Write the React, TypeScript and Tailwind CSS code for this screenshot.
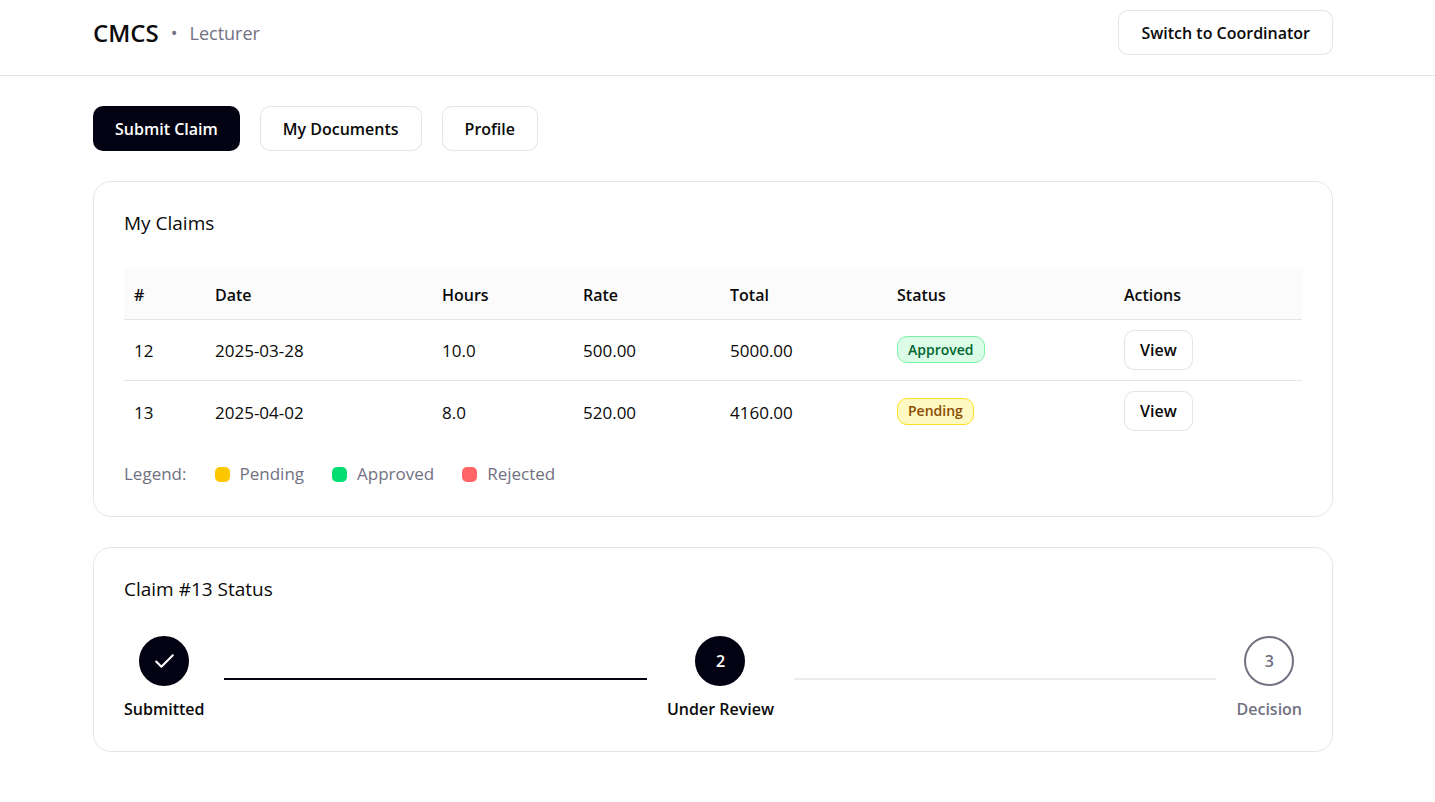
import { Check } from "lucide-react";
import { Fragment } from "react";

const claims = [
  { id: 12, date: "2025-03-28", hours: "10.0", rate: "500.00", total: "5000.00", status: "Approved" },
  { id: 13, date: "2025-04-02", hours: "8.0", rate: "520.00", total: "4160.00", status: "Pending" },
];

const columns = [
  { label: "#", width: "w-[81px]" },
  { label: "Date", width: "w-[227px]" },
  { label: "Hours", width: "w-[141px]" },
  { label: "Rate", width: "w-[147px]" },
  { label: "Total", width: "w-[167px]" },
  { label: "Status", width: "w-[227px]" },
  { label: "Actions", width: "w-[188px]" },
];

const badgeStyles: Record<string, string> = {
  Approved: "bg-green-100 text-green-800 border-green-300",
  Pending: "bg-yellow-100 text-yellow-800 border-[#ffdf20]",
};

const legend = [
  { label: "Pending", color: "bg-[#fdc700]" },
  { label: "Approved", color: "bg-[#05df72]" },
  { label: "Rejected", color: "bg-[#ff6467]" },
];

const steps = [
  { label: "Submitted", state: "done" },
  { label: "Under Review", state: "current" },
  { label: "Decision", state: "upcoming" },
];

const outline = "border border-black/10 bg-white text-[#0a0a0a]";
const button = "h-[45px] rounded-[10px] px-[22px] font-semibold";
const container = "mx-auto max-w-[1280px] px-5";
const textCell = "px-[10px] pt-[3px]";

export default function App() {
  return (
    <div className="bg-white font-['Open_Sans','Noto_Sans',sans-serif] text-base text-[#0a0a0a]">
      <header className="border-b border-black/10 pt-[10px] pr-[9px] pb-5">
        <div className={`${container} flex items-center justify-between`}>
          <div className="flex items-center gap-3">
            <h1 className="text-2xl font-semibold">CMCS</h1>
            <span className="text-lg text-[#717182]">•</span>
            <span className="text-lg text-[#717182]">Lecturer</span>
          </div>
          <button type="button" className={`${button} ${outline}`}>
            Switch to Coordinator
          </button>
        </div>
      </header>

      <main className="pr-[9px]">
        <div className={`${container} flex flex-col gap-[30px] py-[30px]`}>
          <nav className="flex gap-5">
            <button type="button" className={`${button} bg-[#030213] text-white`}>
              Submit Claim
            </button>
            <button type="button" className={`${button} ${outline}`}>
              My Documents
            </button>
            <button type="button" className={`${button} ${outline}`}>
              Profile
            </button>
          </nav>

          <section className="rounded-[18px] border border-black/10 px-[30px] pt-[26px] pb-[29px]">
            <h2 className="text-[19px] leading-[30px]">My Claims</h2>
            <table className="mt-[31px] w-full table-fixed border-collapse text-left">
              <thead>
                <tr className="h-[50px] border-b border-black/10 bg-[#fbfbfc]">
                  {columns.map((c) => (
                    <th key={c.label} scope="col" className={`${textCell} font-semibold ${c.width}`}>
                      {c.label}
                    </th>
                  ))}
                </tr>
              </thead>
              <tbody className="text-[17px]">
                {claims.map((c) => (
                  <tr key={c.id} className="h-[61px] border-b border-black/10 last:border-b-0">
                    <td className={textCell}>{c.id}</td>
                    <td className={textCell}>{c.date}</td>
                    <td className={textCell}>{c.hours}</td>
                    <td className={textCell}>{c.rate}</td>
                    <td className={textCell}>{c.total}</td>
                    <td className="px-[10px]">
                      <span
                        className={`inline-flex h-[27px] items-center rounded-[10px] border px-[10px] text-sm font-semibold ${badgeStyles[c.status]}`}
                      >
                        {c.status}
                      </span>
                    </td>
                    <td className="px-[10px]">
                      <button
                        type="button"
                        className={`h-10 rounded-[10px] px-[15px] text-base font-semibold ${outline}`}
                      >
                        View
                      </button>
                    </td>
                  </tr>
                ))}
              </tbody>
            </table>
            <div className="mt-5 flex items-center gap-7 text-[17px] leading-[26px] text-[#717182]">
              <span>Legend:</span>
              {legend.map((l) => (
                <span key={l.label} className="flex items-center gap-[10px]">
                  <span className={`size-[15px] rounded-[5px] ${l.color}`} />
                  {l.label}
                </span>
              ))}
            </div>
          </section>

          <section className="rounded-[18px] border border-black/10 px-[30px] pt-[26px] pb-[29px]">
            <h2 className="text-[19px] leading-[30px]">Claim #13 Status</h2>
            <div className="mt-8 flex items-center">
              {steps.map((s, i) => (
                <Fragment key={s.label}>
                  {i > 0 && (
                    <div
                      className={`mx-5 h-[2px] flex-1 ${s.state === "current" ? "bg-[#030213]" : "bg-[#ececf0]"}`}
                    />
                  )}
                  <div className="flex flex-col items-center gap-[10px] leading-[26px] font-semibold">
                    <div
                      className={`flex size-[50px] items-center justify-center rounded-full border-2 ${
                        s.state === "upcoming"
                          ? "border-[#717182] bg-white text-[#717182]"
                          : "border-[#030213] bg-[#030213] text-white"
                      }`}
                    >
                      {s.state === "done" ? <Check size={25} strokeWidth={2} /> : i + 1}
                    </div>
                    <span className={s.state === "upcoming" ? "text-[#717182]" : ""}>{s.label}</span>
                  </div>
                </Fragment>
              ))}
            </div>
          </section>
        </div>
      </main>
    </div>
  );
}
